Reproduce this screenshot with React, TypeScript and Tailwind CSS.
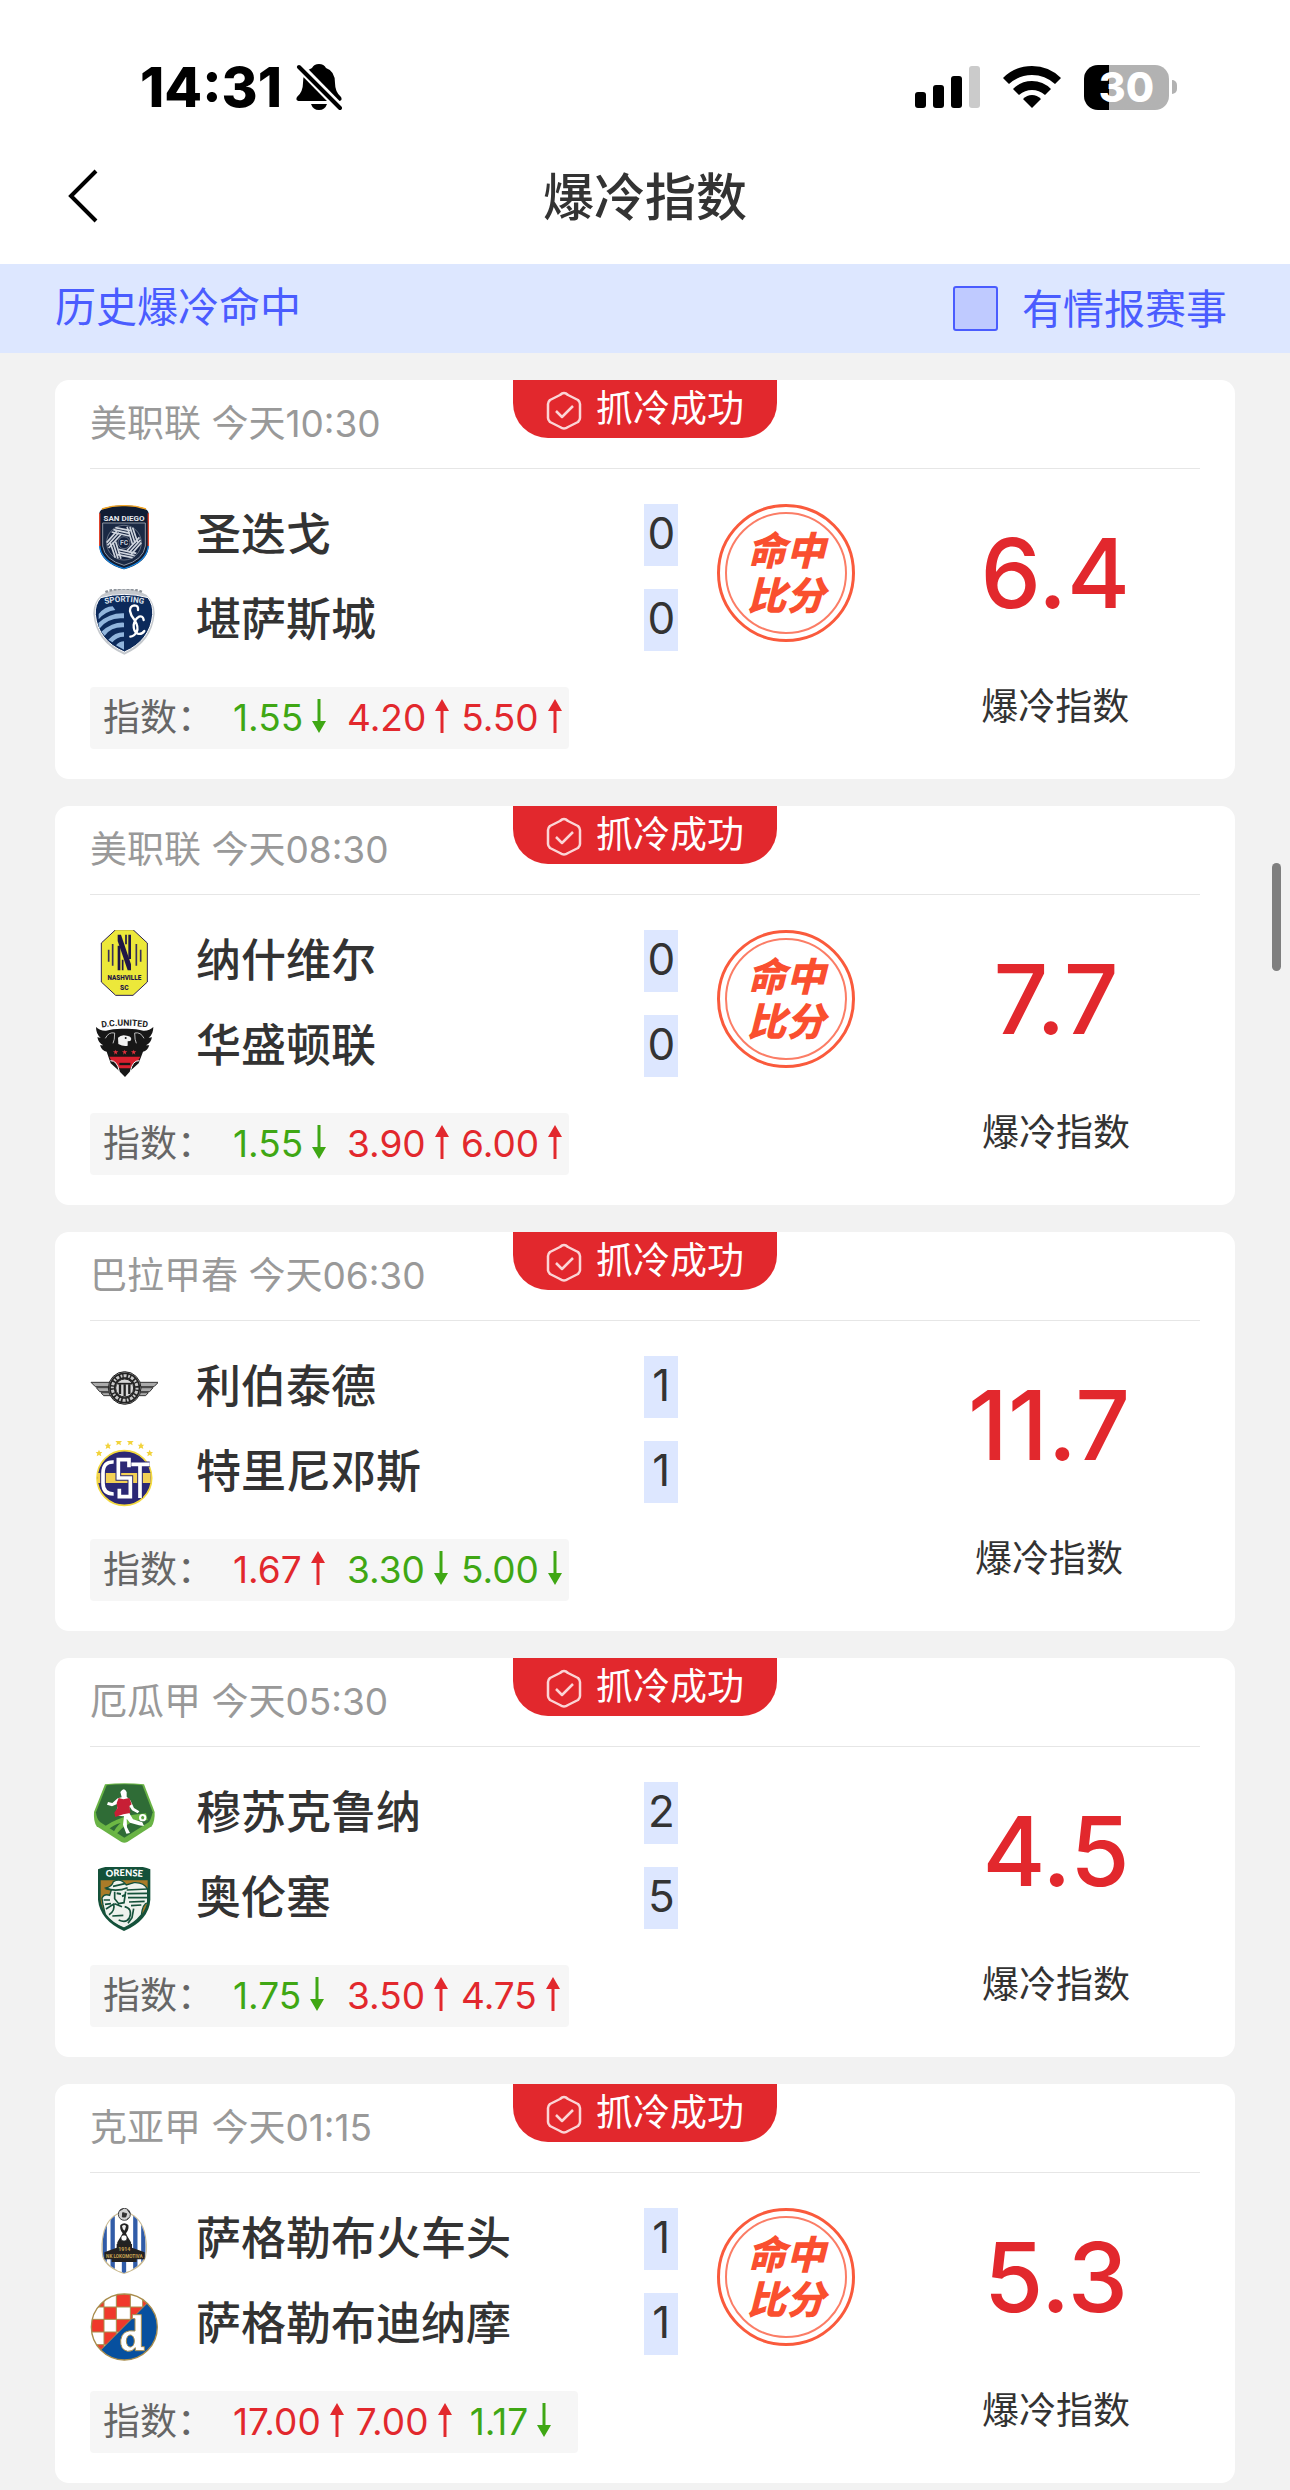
import { ReactNode } from 'react';
import clsx from 'clsx';

type Odd = { value: string; up: boolean };

type Team = { name: string; score: number; logo: ReactNode };

type Match = {
  league: string;
  time: string;
  teams: Team[];
  odds: Odd[];
  index: string;
  hitScore: boolean;
};

type LogoProps = { top: number; children: ReactNode };

// every crest shares one 204 unit square, "top" is where its drawing starts
const Logo = ({ top, children }: LogoProps) => (
  <svg viewBox={`30 ${top} 204 204`} className="w-[68px] h-[68px] shrink-0" aria-hidden="true">
    {children}
  </svg>
);

const SanDiegoLogo = () => (
  <Logo top={42}>
    <path d="M58 70Q60 48 132 46Q204 48 206 70V170Q202 218 132 238Q62 218 58 170Z" fill="#101c33" />
    <path d="M66 57Q100 46 132 47Q164 46 198 57" fill="none" stroke="#f5a623" strokeWidth="4" />
    <path d="M59 70V168M205 70V168" stroke="#e0442c" strokeWidth="4" />
    <path d="M59 168Q64 216 132 236Q200 216 205 168" fill="none" stroke="#1583e0" strokeWidth="4" />
    <path d="M68 99H196V168Q190 210 132 226Q74 210 68 168Z" fill="#1a2944" stroke="#8d96a3" strokeWidth="3" />
    <text x="132" y="94" textAnchor="middle" fontSize="24" fontWeight="700" fontFamily="Roboto, sans-serif" fill="#e5e8ee">SAN DIEGO</text>
    <circle cx="132" cy="158" r="52" fill="#14223e" stroke="#8d96a3" strokeWidth="2" />
    {[0, 60, 120, 180, 240, 300].map((a) => (
      <path
        key={a}
        transform={`rotate(${a} 132 158)`}
        d="M106 113L152 122M100 119L150 130M95 126L148 138"
        stroke="#cfd5de"
        strokeWidth="5"
      />
    ))}
    <circle cx="132" cy="158" r="18" fill="#14223e" stroke="#8d96a3" strokeWidth="2" />
    <text x="132" y="165" textAnchor="middle" fontSize="20" fontWeight="700" fontFamily="Roboto, sans-serif" fill="#c3cad5">FC</text>
  </Logo>
);

const SportingLogo = () => (
  <Logo top={297}>
    <path d="M65 314Q132 276 199 314Q225 338 224 372Q216 458 133 494Q48 458 40 372Q39 338 65 314Z" fill="#c4c8cd" />
    <path d="M76 306Q132 286 188 306" fill="none" stroke="#8e949b" strokeWidth="7" strokeDasharray="8 5" />
    <path d="M62 323Q132 303 204 323Q220 344 218 374Q210 452 133 486Q54 452 46 374Q44 344 62 323Z" fill="#0c2a5b" stroke="#fff" strokeWidth="3" />
    <path id="arcSporting" d="M56 347Q132 324 210 347" fill="none" />
    <text fontSize="24" fontWeight="700" fontFamily="Roboto, sans-serif" fill="#dfe5ee" textAnchor="middle">
      <textPath href="#arcSporting" startOffset="50%">SPORTING</textPath>
    </text>
    <path d="M56 372Q74 350 98 349L106 360Q76 364 56 388ZM55 399Q90 368 132 370V385Q85 380 58 416ZM64 425Q98 396 132 398V412Q94 410 74 437ZM85 449Q106 426 132 427V440Q110 440 97 457ZM108 466Q118 454 132 454V479Z" fill="#91b5dc" />
    <path d="M174 360Q176 346 163 346Q149 348 150 363Q152 377 164 391Q177 410 170 426Q162 439 151 440M191 390Q189 376 177 380Q164 387 161 405Q160 425 173 431Q186 434 193 423" fill="none" stroke="#fff" strokeWidth="7" strokeLinecap="round" />
  </Logo>
);

const NashvilleLogo = () => (
  <Logo top={45}>
    <path d="M107 44H159L202 84V201L159 241H107L64 201V84Z" fill="#ece83a" stroke="#2a1f54" strokeWidth="3" />
    <path d="M86 104V140M98 87V152M169 87V152M182 104V140" stroke="#38305a" strokeWidth="5" />
    <path d="M117 92V166M149 59V132" stroke="#1f1646" strokeWidth="8" />
    <path d="M113 59H123L153 148V166H143L113 78Z" fill="#1f1646" />
    <path d="M128 134V166M138 59V88" stroke="#1f1646" strokeWidth="5" />
    <text x="133" y="194" textAnchor="middle" fontSize="19" fontWeight="900" fontFamily="Roboto, sans-serif" fill="#1f1646">NASHVILLE</text>
    <text x="133" y="224" textAnchor="middle" fontSize="20" fontWeight="900" fontFamily="Roboto, sans-serif" fill="#1f1646">SC</text>
  </Logo>
);

const DcUnitedLogo = () => (
  <Logo top={300}>
    <path id="arcDc" d="M50 340Q134 324 218 340" fill="none" />
    <text fontSize="26" fontWeight="700" fontFamily="Roboto, sans-serif" fill="#222" textAnchor="middle">
      <textPath href="#arcDc" startOffset="50%">D.C.UNITED</textPath>
    </text>
    <path d="M48 336Q60 348 78 347Q100 340 134 341Q168 340 190 347Q208 348 220 336Q220 358 206 368L216 367Q212 386 198 391L208 391Q202 408 189 410L176 445L156 463L135 486L112 463L92 445L80 410Q66 408 60 391L70 391Q56 386 52 367L62 368Q48 358 48 336Z" fill="#171717" />
    <path d="M76 370Q86 350 104 354Q104 376 99 385M192 370Q182 350 164 354Q164 376 169 385" fill="none" stroke="#bbb" strokeWidth="3" />
    <path d="M114 368Q124 357 141 362Q160 366 151 378L143 379V392Q130 395 115 387Z" fill="#f2f2f2" />
    <circle cx="137" cy="369" r="3" fill="#171717" />
    <path d="M88 425H181L174 437Q164 438 157 449L152 460H116L110 448Q104 438 94 437Z" fill="#d9202f" />
    <path d="M118 447H151" stroke="#171717" strokeWidth="7" />
    <path d="M91 437Q112 436 118 470M178 437Q157 436 151 470" fill="none" stroke="#fff" strokeWidth="3" />
    {[107, 134, 161].map((x) => (
      <path key={x} transform={`translate(${x} 412)`} d="M0-8L2-3H8L3 1L5 7L0 3L-5 7L-3 1L-8-3H-2Z" fill="#e0313c" />
    ))}
  </Logo>
);

const LibertadLogo = () => (
  <Logo top={48}>
    <path d="M33 127H235L222 140H46ZM49 143H219L209 155H59ZM63 158H205L197 167H71Z" fill="#aaa" stroke="#333" strokeWidth="3" />
    <circle cx="134" cy="144" r="49" fill="#bdbdbd" stroke="#222" strokeWidth="3" />
    <circle cx="134" cy="144" r="37" fill="none" stroke="#222" strokeWidth="19" />
    <circle cx="134" cy="144" r="37" fill="none" stroke="#c8c8c8" strokeWidth="9" strokeDasharray="5 4 9 5" />
    <circle cx="134" cy="144" r="27" fill="#d7d7d7" stroke="#222" strokeWidth="3" />
    <path d="M112 131H156" stroke="#222" strokeWidth="5" />
    <path d="M120 133V162M134 133V169M148 133V162" stroke="#222" strokeWidth="7" />
  </Logo>
);

const TrinidenseLogo = () => (
  <Logo top={303}>
    {[[57, 340], [84, 318], [116, 307], [151, 307], [183, 318], [209, 340]].map(([x, y]) => (
      <path key={x} transform={`translate(${x} ${y})`} d="M0-11L3-4H10L5 1L7 9L0 5L-7 9L-5 1L-10-4H-3Z" fill="#f2d33c" />
    ))}
    <circle cx="133" cy="414" r="82" fill="#2c2875" stroke="#f3d93d" strokeWidth="5" />
    <path d="M54 399H212V429H54Z" fill="#f3d054" />
    <g fill="none" stroke="#2c2875" strokeWidth="17">
      <path d="M101 366Q69 364 69 400V430Q69 462 101 462" />
      <path d="M147 378V359H115V414H151V470H118V450" />
      <path d="M154 373H209M180 373V474" />
    </g>
    <g fill="none" stroke="#fff" strokeWidth="11">
      <path d="M101 366Q69 364 69 400V430Q69 462 101 462" />
      <path d="M147 382V359H115V414H151V470H118V446" />
      <path d="M154 373H209M180 373V474" />
    </g>
  </Logo>
);

const MushucRunaLogo = () => (
  <Logo top={36}>
    <path d="M75 43Q133 36 192 43L224 126Q225 154 215 169L142 216Q133 221 124 216L50 169Q40 154 42 126Z" fill="#69b345" />
    <path d="M80 46Q133 40 187 46L218 127Q213 148 207 156L133 203L60 156Q50 148 48 127Z" fill="#2f6c36" />
    <path d="M68 174Q95 153 126 143Q157 133 198 130L203 151Q150 144 109 192L98 193Q106 172 122 159Q101 163 80 183Z" fill="#6cb844" />
    <path d="M121 66Q132 50 140 66L140 80L151 91L162 114L178 124L173 130L156 121L148 108L149 131L159 148L187 157L192 168L177 166L150 158L140 146L141 172L150 189L139 191L129 164L132 139L108 137L113 101L96 109L81 104L84 96L97 99L113 85L125 82Z" fill="#fff" />
    <path d="M116 84L130 88L148 84L155 103L148 108L151 129L130 133L106 141L103 128L112 115L110 99Z" fill="#c71f35" />
    <circle cx="188" cy="143" r="11" fill="#fff" />
    <path d="M188 137L193 141L191 148H185L183 141Z" fill="#58a340" />
  </Logo>
);

const OrenseLogo = () => (
  <Logo top={291}>
    <path d="M54 298Q82 286 132 285Q182 286 211 298V389Q207 450 132 483Q60 450 54 389Z" fill="#14513a" />
    <path d="M62 331H203V390Q196 443 132 473Q69 443 62 390Z" fill="#a97b28" />
    <path id="arcOrense" d="M54 324Q132 312 212 324" fill="none" />
    <text fontSize="28" fontWeight="900" fontFamily="Lato, sans-serif" fill="#fff" textAnchor="middle">
      <textPath href="#arcOrense" startOffset="50%">ORENSE</textPath>
    </text>
    <path d="M78 354Q97 349 100 335Q122 322 139 345L162 338Q191 336 203 358V398Q188 401 184 435Q163 461 132 474Q94 459 76 433L69 404L66 385Q72 370 89 376L94 360Z" fill="#eef2ed" stroke="#14513a" strokeWidth="4" />
    <path d="M77 356Q112 366 143 353M99 349L135 341M104 365V386L116 401L132 398L137 365M71 390H90M75 403L93 401M78 417L101 402Q106 423 87 434M104 401L126 410M140 360L203 357M142 371L204 370M144 383H203M147 396L194 394M153 407L184 405M134 410Q159 416 148 444Q139 460 116 450M161 416L156 443L144 460M97 438L130 436" fill="none" stroke="#14513a" strokeWidth="5" />
    <path d="M110 370L123 372M126 379L135 375" stroke="#14513a" strokeWidth="6" />
  </Logo>
);

const LokomotivaLogo = () => (
  <Logo top={36}>
    <clipPath id="lokoShape">
      <path d="M132 49Q90 57 74 105Q63 144 70 181Q81 213 132 231Q183 213 195 181Q202 144 191 105Q175 57 132 49Z" />
    </clipPath>
    <path d="M132 46Q88 54 71 104Q60 144 67 183Q79 217 132 234Q186 217 198 183Q205 144 194 104Q177 54 132 46Z" fill="#c9b98f" />
    <g clipPath="url(#lokoShape)">
      <path d="M60 40H210V240H60Z" fill="#fff" />
      <path d="M74 40V240M98 40V240M132 180V240M166 40V240M190 40V240" stroke="#315ca8" strokeWidth="13" />
      <path d="M116 180V240M148 180V240" stroke="#fff" strokeWidth="9" />
    </g>
    <circle cx="133" cy="55" r="18" fill="#d4d4d4" stroke="#454545" strokeWidth="3" />
    <path d="M128 50L140 53L137 63H127ZM119 43L128 40M146 66L140 71M142 41L150 52" fill="#333" stroke="#333" strokeWidth="3" />
    <path d="M121 87Q133 76 145 87Q148 101 138 112L143 122L153 139L156 170H110L112 139L122 122L128 112Q118 101 121 87Z" fill="#222" />
    <path d="M126 90Q133 84 138 90Q136 102 133 104Q127 99 126 90Z" fill="#eee" />
    <circle cx="132" cy="126" r="9" fill="#fff" stroke="#333" strokeWidth="2" />
    <path d="M73 169L110 155V144H156V155L194 169V190L170 190V198H95V190H73Z" fill="#242120" />
    <text x="133" y="164" textAnchor="middle" fontSize="16" fontWeight="700" fontFamily="Roboto, sans-serif" fill="#c7a152">1914</text>
    <text x="133" y="186" textAnchor="middle" fontSize="14" fontWeight="700" fontFamily="Roboto, sans-serif" fill="#c7a152">NK LOKOMOTIVA</text>
  </Logo>
);

const DinamoLogo = () => (
  <Logo top={286}>
    <clipPath id="dinamoShape">
      <circle cx="133" cy="388" r="99" />
    </clipPath>
    <g clipPath="url(#dinamoShape)">
      <path d="M30 280H240V490H30Z" fill="#fff" />
      <path d="M109 287H151V328H109ZM72 328H109V365H72ZM151 328H188V365H151ZM32 365H72V403H32ZM109 365H151V403H109ZM72 403H109V441H72ZM32 441H72V480H32ZM188 287H225V328H188ZM32 287H72V328H32Z" fill="#f0392b" />
      <path d="M72 287V460M109 287V440M151 287V400M188 287V360M32 328H230M32 365H190M32 403H150M32 441H110" stroke="#a98d4d" strokeWidth="3" />
      <path d="M206 312L60 459L100 500H250V300Z" fill="#07509f" />
      <path d="M206 312L60 459" stroke="#a98d4d" strokeWidth="3" />
    </g>
    <circle cx="133" cy="388" r="99" fill="none" stroke="#a98d4d" strokeWidth="4" />
    <path d="M157 351H184V447H193V459H166V450Q157 462 143 461Q120 456 122 427Q127 394 165 400V363H157Z" fill="#fff" stroke="#a98d4d" strokeWidth="3" />
    <ellipse cx="151" cy="430" rx="12" ry="18" fill="#07509f" stroke="#a98d4d" strokeWidth="3" />
  </Logo>
);

const matches: Match[] = [
  {
    league: '美职联',
    time: '今天10:30',
    teams: [
      { name: '圣迭戈', score: 0, logo: <SanDiegoLogo /> },
      { name: '堪萨斯城', score: 0, logo: <SportingLogo /> },
    ],
    odds: [
      { value: '1.55', up: false },
      { value: '4.20', up: true },
      { value: '5.50', up: true },
    ],
    index: '6.4',
    hitScore: true,
  },
  {
    league: '美职联',
    time: '今天08:30',
    teams: [
      { name: '纳什维尔', score: 0, logo: <NashvilleLogo /> },
      { name: '华盛顿联', score: 0, logo: <DcUnitedLogo /> },
    ],
    odds: [
      { value: '1.55', up: false },
      { value: '3.90', up: true },
      { value: '6.00', up: true },
    ],
    index: '7.7',
    hitScore: true,
  },
  {
    league: '巴拉甲春',
    time: '今天06:30',
    teams: [
      { name: '利伯泰德', score: 1, logo: <LibertadLogo /> },
      { name: '特里尼邓斯', score: 1, logo: <TrinidenseLogo /> },
    ],
    odds: [
      { value: '1.67', up: true },
      { value: '3.30', up: false },
      { value: '5.00', up: false },
    ],
    index: '11.7',
    hitScore: false,
  },
  {
    league: '厄瓜甲',
    time: '今天05:30',
    teams: [
      { name: '穆苏克鲁纳', score: 2, logo: <MushucRunaLogo /> },
      { name: '奥伦塞', score: 5, logo: <OrenseLogo /> },
    ],
    odds: [
      { value: '1.75', up: false },
      { value: '3.50', up: true },
      { value: '4.75', up: true },
    ],
    index: '4.5',
    hitScore: false,
  },
  {
    league: '克亚甲',
    time: '今天01:15',
    teams: [
      { name: '萨格勒布火车头', score: 1, logo: <LokomotivaLogo /> },
      { name: '萨格勒布迪纳摩', score: 1, logo: <DinamoLogo /> },
    ],
    odds: [
      { value: '17.00', up: true },
      { value: '7.00', up: true },
      { value: '1.17', up: false },
    ],
    index: '5.3',
    hitScore: true,
  },
];

const StatusBar = () => (
  <div className="h-[128px] pt-[46px] pl-[140px] pr-[113px] flex items-center justify-between">
    <div className="flex items-center gap-[14px]">
      <span className="text-[55px] leading-[60px] font-extrabold text-black">14:31</span>
      <svg viewBox="0 0 46 48" className="w-[46px] h-[48px]" aria-hidden="true">
        <path d="M23 1Q28 1 30 5Q39 8 39 20Q39 29 45 34Q47 38 42 38H4Q-1 38 1 34Q7 29 7 20Q7 8 16 5Q18 1 23 1Z" />
        <path d="M15 41H31Q29 47 23 47Q17 47 15 41Z" />
        <path d="M0 0L48 49" stroke="#fff" strokeWidth="9" />
        <path d="M3 4L44 45" stroke="#000" strokeWidth="4" strokeLinecap="round" />
      </svg>
    </div>
    <div className="flex items-center gap-[23px]">
      <svg viewBox="0 0 65 42" className="w-[65px] h-[42px]" aria-hidden="true">
        <rect x="0" y="26" width="11" height="16" rx="3" />
        <rect x="18" y="19" width="11" height="23" rx="3" />
        <rect x="36" y="10" width="11" height="32" rx="3" />
        <rect x="54" y="0" width="11" height="42" rx="3" fill="#cbcbcb" />
      </svg>
      <svg viewBox="0 0 58 42" className="w-[58px] h-[42px]" aria-hidden="true">
        <path d="M0 12Q12 0 29 0Q46 0 58 12L52 18Q42 9 29 9Q16 9 6 18Z" />
        <path d="M10 23Q18 15 29 15Q40 15 48 23L42 29Q36 24 29 24Q22 24 16 29Z" />
        <path d="M20 33Q24 29 29 29Q34 29 38 33L29 42Z" />
      </svg>
      <div className="flex items-center gap-[3px]">
        <div className="w-[85px] h-[45px] rounded-[14px] bg-linear-to-r from-black from-30% to-[#b2b2b2] to-30% flex items-center justify-center text-[41px] leading-none font-extrabold text-white">
          30
        </div>
        <div className="w-[5px] h-[14px] rounded-r-full bg-[#b2b2b2]" />
      </div>
    </div>
  </div>
);

const OddArrow = ({ up }: { up: boolean }) => (
  <svg viewBox="0 0 16 34" className="mb-1 w-4 h-[34px]" fill="currentColor" aria-hidden="true">
    {up ? <path d="M8 0L15 12H9.5V34H6.5V12H1Z" /> : <path d="M8 34L15 22H9.5V0H6.5V22H1Z" />}
  </svg>
);

const HitStamp = () => (
  <div className="ml-[39px] w-[138px] h-[138px] shrink-0 rounded-full border-3 border-[#fa5a3c] p-[5px]">
    <div className="w-full h-full rounded-full border-2 border-[#fb7d66] flex flex-col items-center justify-center text-[39px] leading-[45px] font-black italic text-[#fa4f2f]">
      <span>命中</span>
      <span>比分</span>
    </div>
  </div>
);

const MatchCard = ({ match }: { match: Match }) => (
  <article className="relative bg-white rounded-[14px] px-[35px] pb-[30px]">
    <div className="absolute top-0 left-1/2 -translate-x-1/2 h-[58px] px-[33px] rounded-b-[35px] bg-[#e2282d] text-white flex items-center gap-[14px] whitespace-nowrap">
      <svg viewBox="0 0 36 40" className="mt-1 w-9 h-10" fill="none" stroke="#fbd5d6" strokeWidth="2.5" strokeLinejoin="round" aria-hidden="true">
        <path d="M18 2Q20 2 22 4L32 9Q34 11 34 13V27Q34 29 32 31L22 36Q18 39 14 36L4 31Q2 29 2 27V13Q2 11 4 9L14 4Q16 2 18 2Z" />
        <path d="M10 20L16 26L27 15" />
      </svg>
      <span className="text-[37px] leading-[58px]">抓冷成功</span>
    </div>
    <header className="h-[89px] border-b border-[#e6e6e6] text-[37px] leading-[88px] text-[#999]">
      {match.league} {match.time}
    </header>

    <div className="pt-[35px] flex">
      <div className="basis-[53%] shrink-0">
        <div className="flex flex-col gap-[17px]">
          {match.teams.map((team) => (
            <div key={team.name} className="h-[68px] flex items-start">
              {team.logo}
              <span className="ml-[38px] text-[45px] leading-[62px] font-medium text-[#333]">{team.name}</span>
              <span className="ml-auto w-[34px] h-[62px] bg-[#dde7ff] text-[44px] leading-[58px] text-center text-[#333]">
                {team.score}
              </span>
            </div>
          ))}
        </div>
        <div className="mt-[30px] w-fit h-[62px] rounded bg-[#f6f6f6] pl-[13px] flex items-center text-[37px] leading-[62px]">
          <span className="w-[130px] text-[#666]">指数：</span>
          <div className="flex gap-[6px]">
            {match.odds.map((odd) => (
              <span
                key={odd.value}
                className={clsx(
                  'min-w-[108px] pr-[5px] flex items-center gap-2',
                  odd.up ? 'text-[#e2282d]' : 'text-[#3fa714]',
                )}
              >
                {odd.value}
                <OddArrow up={odd.up} />
              </span>
            ))}
          </div>
        </div>
      </div>
      {match.hitScore && <HitStamp />}
      <div className="ml-auto mr-[70px] flex flex-col items-center">
        <strong className="text-[96px] leading-[138px] font-medium text-[#e2282d]">{match.index}</strong>
        <span className="mt-[38px] text-[37px] leading-[54px] text-[#333]">爆冷指数</span>
      </div>
    </div>
  </article>
);

const App = () => {
  return (
    <div className="min-h-screen bg-[#f2f2f2] font-['Inter','Noto_Sans_CJK_SC',sans-serif]">
      <header className="bg-white">
        <StatusBar />
        <div className="h-[136px] px-[55px] grid grid-cols-[1fr_auto_1fr] items-center">
          <button type="button" aria-label="返回" className="w-[56px] h-[56px] flex items-center justify-center">
            <svg viewBox="0 0 30 54" className="w-[30px] h-[54px]" fill="none" stroke="#000" strokeWidth="4" aria-hidden="true">
              <path d="M28 2L3 27L28 52" />
            </svg>
          </button>
          <h1 className="pt-1 text-[51px] leading-[72px] font-medium text-[#333]">爆冷指数</h1>
        </div>
      </header>

      <div className="h-[89px] pl-[55px] pr-[63px] bg-[#dde7ff] text-[41px] leading-[60px] text-[#4a5cff] flex items-center justify-between">
        <h2 className="pb-1">历史爆冷命中</h2>
        <label className="flex items-center gap-6">
          <input
            type="checkbox"
            className="appearance-none w-[45px] h-[45px] rounded-[3px] border-2 border-[#4a5cff] bg-[#bfcaff] checked:bg-[#4a5cff]"
          />
          有情报赛事
        </label>
      </div>

      <main className="px-[55px] pt-[27px] pb-2 flex flex-col gap-[27px]">
        {matches.map((match) => (
          <MatchCard key={match.league + match.time} match={match} />
        ))}
      </main>

      <div className="fixed right-[9px] top-[863px] w-[9px] h-[108px] rounded-full bg-[#7f7f7f]" />
    </div>
  );
};

export default App;
